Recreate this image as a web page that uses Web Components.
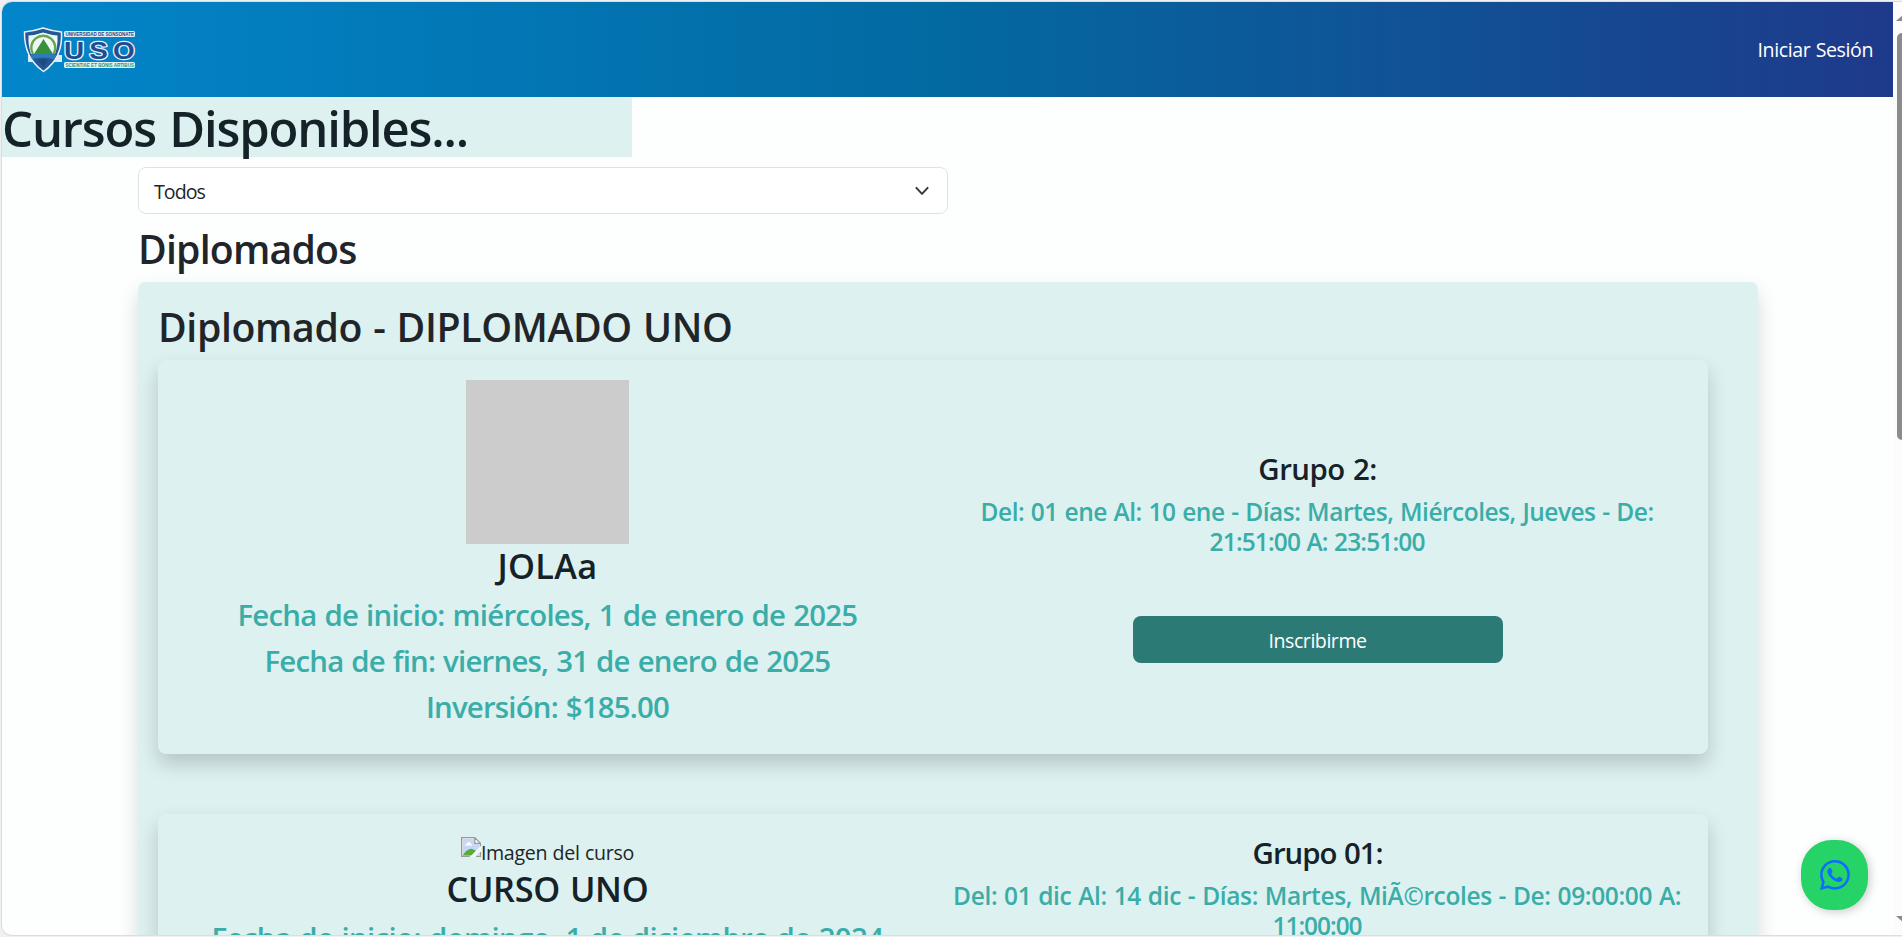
<!DOCTYPE html>
<html lang="es">
<head>
<meta charset="utf-8">
<title>Cursos Disponibles</title>
<style>
html,body{margin:0;height:100%;overflow:hidden;background:#f4f4f5}
body{font-family:"Open Sans","Noto Sans",sans-serif;font-size:19.6px;line-height:30px;color:#212529}
</style>
</head>
<body>
<courses-page></courses-page>
<script>
const define=(name,html,ready)=>customElements.define(name,class extends HTMLElement{
  connectedCallback(){
    if(this.shadowRoot)return;
    this.attachShadow({mode:'open'}).innerHTML=html;
    if(ready)ready.call(this,this.shadowRoot);
  }
});

// One line of text, tracked so that it takes up the width in its "w" attribute.
define('fit-text','<style>:host{display:inline-block;white-space:nowrap;word-spacing:.035em}</style><slot></slot>',function(){
  const w=parseFloat(this.getAttribute('w')),n=this.textContent.length;
  const r=document.createRange();r.selectNodeContents(this);
  const now=r.getBoundingClientRect().width;
  if(now)this.style.letterSpacing=((w-now)/n).toFixed(3)+'px';
});

define('uso-logo',`<style>:host{display:block;width:118px;height:46px}svg{display:block;overflow:visible}</style>
<svg width="118" height="46" viewBox="0 0 118 46">
<path d="M5 28h34v7H5z" fill="#dfe9f2"/>
<path d="M1.5 5Q11 4 20 1Q29 4 38.500 5Q40 31 20.500 44.500Q1 31 1.500 5Z" fill="#245796" stroke="#e8f1f8" stroke-width="1.5"/>
<path d="M5.500 8.500Q13 8 20 5.500Q28 8 34.500 8.500Q35 19 32 27H8Q5 19 5.500 8.500Z" fill="#f0f6f8"/>
<path d="M10 27A12 12 0 1 1 30.500 27" fill="none" stroke="#63a84a" stroke-width="2.4"/>
<path d="M20.500 12L30 27H11Z" fill="#36913b"/>
<path d="M7 28Q19 25.500 34 28L31 32Q19 29 9 32Z" fill="#2e7dba"/>
<path d="M15 33Q20 31 25 33L20.500 40Z" fill="#1d4a86"/>
<rect x="41" y="4" width="71" height="6" rx="1.5" fill="#e4edf5"/>
<rect x="41" y="35" width="71" height="6" rx="1.5" fill="#e4f1f0"/>
<g font-family="Liberation Sans,sans-serif" font-weight="700">
<text x="42.500" y="9.200" font-size="5.8" textLength="68.500" lengthAdjust="spacingAndGlyphs" fill="#24477f">UNIVERSIDAD DE SONSONATE</text>
<text transform="translate(41 31.500) scale(1.16 1)" font-size="24" textLength="61" fill="#234b8d" stroke="#e8f1f8" stroke-width="2.4" paint-order="stroke" stroke-linejoin="round">USO</text>
<text x="42.500" y="40.300" font-size="5.8" textLength="68.500" lengthAdjust="spacingAndGlyphs" fill="#25957a">SCIENTIAE ET BONIS ARTIBUS</text>
</g></svg>`);

define('top-bar',`<style>
:host{display:flex;align-items:center;justify-content:space-between;height:95px;box-sizing:border-box;padding:0 20px 0 21px;
background:linear-gradient(90deg,#0286ca,#0369a1 50%,#1e3a8a);color:#fff}
fit-text{padding-top:1px}
</style><uso-logo></uso-logo><fit-text w="115.5">Iniciar Sesión</fit-text>`);

define('filter-select',`<style>
:host{display:flex;align-items:center;justify-content:space-between;box-sizing:border-box;width:810px;height:47px;
margin:10px 0 0 136px;padding:2px 15px 0 15px;border:1px solid #dee2e6;border-radius:8px;background:#fff}
svg{margin-top:-2px}
</style><fit-text w="51">Todos</fit-text>
<svg width="20" height="20" viewBox="0 0 16 16" fill="none" stroke="#343a40" stroke-width="1.6" stroke-linecap="round" stroke-linejoin="round"><path d="m3.500 5.500 4.500 4.800 4.500-4.800"/></svg>`);

define('group-info',`<style>
:host{display:block}
h5,p{margin:0;font-weight:600;text-align:center}
h5{font-size:29.4px;line-height:36px;color:#152228}
p{margin:10px 1px 0 0;font-size:24.5px;line-height:30px;color:#3aada8}
fit-text{display:block;width:max-content;margin:0 auto}
::slotted(action-button){margin:59px auto 0}
</style><h5><slot name="title"></slot></h5><p><slot></slot></p><slot name="action"></slot>`);

define('action-button',`<style>
:host{display:block;width:370px;height:47px}
button{display:block;width:100%;height:100%;border:0;border-radius:8px;background:#2c7a76;color:#fff;font:inherit;line-height:30px;padding:3px 0 0}
</style><button><slot></slot></button>`);

define('course-image',`<style>:host{display:block;width:163px;height:164px;background:#ccc;margin:0 auto 1px}</style>`);

define('broken-image',`<style>
:host{display:flex;justify-content:center;height:30px;color:#212529}svg{margin-top:-1px}
</style>
<svg width="20" height="20" viewBox="0 0 16 16"><path d="M.5 .5H11L15.5 5V15.5H.5Z" fill="#fff"/><path d="M1.3 1.3H10.5V5.5H14.7V14.7H1.3Z" fill="#c6d7f7"/>
<path d="M3 6.8Q3 5.5 4.5 5.5Q5 3.8 6.5 4Q7.6 4.2 7.8 5.5Q9 5.5 9 6.8Z" fill="#fff"/>
<path d="M1.3 14.7Q5 9 9 9.5L12 11L9 14.7Z" fill="#56ad38"/>
<path d="M11 .5V5H15.5M.5 0V16M0 .5H11L15.5 5V9M0 15.5H7M12 15.5H16M15.5 12V16" fill="none" stroke="#999"/>
<path d="M16 7L7 16H11L16 11Z" fill="#eef8f7"/></svg><slot></slot>`);

define('course-card',`<style>
:host{display:grid;grid-template-columns:1fr 1fr;box-sizing:border-box;width:1550px;padding:20px 5.33px 19px 4.33px;border-radius:8px;
background:#ddf1f0;box-shadow:0 10px 20px rgba(0,0,0,.18)}
.left,.right{min-width:0}
.left{text-align:center}
.right{align-self:var(--side,center)}
h4,p{margin:0;font-weight:600}
h4{font-size:34.3px;line-height:42px;color:#152228;margin-bottom:10px}
::slotted([slot=line]){display:block!important;width:max-content;margin:0 auto 10px;font-size:29.4px;line-height:36px;font-weight:600;color:#3aada8}
</style>
<div class="left"><slot name="image"></slot><h4><slot name="name"></slot></h4><slot name="line"></slot></div>
<div class="right"><slot></slot></div>`);

define('program-panel',`<style>
:host{display:block;box-sizing:border-box;width:1620px;height:1000px;margin:9px 0 0 136px;padding:21px 20px;border-radius:8px;
background:#ddf1f0;box-shadow:0 10px 20px rgba(0,0,0,.15)}
h2{margin:0 0 9px;font-size:39.2px;line-height:48px;font-weight:600}
</style><h2><slot name="title"></slot></h2><slot></slot>`);

define('whatsapp-button',`<style>
:host{position:absolute;right:34px;bottom:27px;width:67px;height:70px;border-radius:31px;background:#25d366;
box-shadow:2px 2px 10px rgba(0,0,0,.2);display:flex;align-items:center;justify-content:center}
</style><svg width="30" height="30" viewBox="0 0 16 16" fill="#0d6efd"><path d="M13.601 2.326A7.85 7.85 0 0 0 7.994 0C3.627 0 .068 3.558.064 7.926c0 1.399.366 2.76 1.057 3.965L0 16l4.204-1.102a7.9 7.9 0 0 0 3.79.965h.004c4.368 0 7.926-3.558 7.93-7.93A7.9 7.9 0 0 0 13.6 2.326zM7.994 14.521a6.6 6.6 0 0 1-3.356-.92l-.24-.144-2.494.654.666-2.433-.156-.251a6.56 6.56 0 0 1-1.007-3.505c0-3.626 2.957-6.584 6.591-6.584a6.56 6.56 0 0 1 4.66 1.931 6.56 6.56 0 0 1 1.928 4.66c-.004 3.639-2.961 6.592-6.592 6.592m3.615-4.934c-.197-.099-1.17-.578-1.353-.646-.182-.065-.315-.099-.445.099-.133.197-.513.646-.627.775-.114.133-.232.148-.43.05-.197-.1-.836-.308-1.592-.985-.59-.525-.985-1.175-1.103-1.372-.114-.198-.011-.304.088-.403.087-.088.197-.232.296-.346.1-.114.133-.198.198-.33.065-.134.034-.248-.015-.347-.05-.099-.445-1.076-.612-1.47-.16-.389-.323-.335-.445-.34-.114-.007-.247-.007-.38-.007a.73.73 0 0 0-.529.247c-.182.198-.691.677-.691 1.654s.71 1.916.81 2.049c.098.133 1.394 2.132 3.383 2.992.47.205.84.326 1.129.418.475.152.904.129 1.246.08.38-.058 1.171-.48 1.338-.943.164-.464.164-.86.114-.943-.049-.084-.182-.133-.38-.232"/></svg>`);

define('scroll-rail',`<style>
:host{display:flex;flex-direction:column;width:9px;height:933px;background:#fcfcfc;overflow:hidden}
.up,.down{width:14px;height:6px;margin-left:3px;background:#8b8b8b;flex:none}
.up{margin-top:13px;clip-path:polygon(50% 0,100% 100%,0 100%)}
.thumb{width:10px;height:407px;margin:12px 0 0 4px;border-radius:5px;background:#8b8b8b;flex:none}
.down{margin-top:auto;margin-bottom:13px;clip-path:polygon(0 0,100% 0,50% 100%)}
</style><div class="up"></div><div class="thumb"></div><div class="down"></div>`);

define('courses-page',`<style>
:host{display:block;height:937px;box-sizing:border-box;padding:2px 0 2px 2px;background:#f0f0f0;position:relative}
.window{display:flex;height:933px;overflow:hidden;border-radius:10px 0 0 10px;box-shadow:0 0 0 1px #ddd;background:#fdfefe}
main{width:1891px;flex:none}
h1{box-sizing:border-box;width:630px;height:60px;margin:0;padding:1px 0 0;background:#ddf1f0;font-size:49px;line-height:60px;font-weight:600;color:#152228}
.section{margin:11px 0 0 136px;font-size:39.2px;line-height:48px;font-weight:600}
course-card group-info{margin-top:-2px}
course-card+course-card{margin-top:60px;padding-top:24px;--side:start}
course-card+course-card group-info{margin-top:-3px}
.l{display:block;width:max-content;margin:0 auto}
</style>
<div class="window"><main>
<top-bar></top-bar>
<h1><fit-text w="466">Cursos Disponibles...</fit-text></h1>
<filter-select></filter-select>
<h2 class="section"><fit-text w="218.5">Diplomados</fit-text></h2>
<program-panel>
<fit-text slot="title" w="574.5">Diplomado - DIPLOMADO UNO</fit-text>
<course-card>
<course-image slot="image"></course-image>
<fit-text slot="name" w="100">JOLAa</fit-text>
<fit-text slot="line" w="620">Fecha de inicio: miércoles, 1 de enero de 2025</fit-text>
<fit-text slot="line" w="566">Fecha de fin: viernes, 31 de enero de 2025</fit-text>
<fit-text slot="line" w="243">Inversión: $185.00</fit-text>
<group-info>
<fit-text slot="title" w="118.5">Grupo 2:</fit-text>
<fit-text class="l" w="673">Del: 01 ene Al: 10 ene - Días: Martes, Miércoles, Jueves - De:</fit-text>
<fit-text class="l" w="215">21:51:00 A: 23:51:00</fit-text>
<action-button slot="action"><fit-text w="98">Inscribirme</fit-text></action-button>
</group-info>
</course-card>
<course-card>
<broken-image slot="image"><fit-text w="153">Imagen del curso</fit-text></broken-image>
<fit-text slot="name" w="202">CURSO UNO</fit-text>
<fit-text slot="line" w="672">Fecha de inicio: domingo, 1 de diciembre de 2024</fit-text>
<group-info>
<fit-text slot="title" w="130">Grupo 01:</fit-text>
<fit-text class="l" w="728">Del: 01 dic Al: 14 dic - Días: Martes, MiÃ©rcoles - De: 09:00:00 A:</fit-text>
<fit-text class="l" w="89">11:00:00</fit-text>
</group-info>
</course-card>
</program-panel>
</main><scroll-rail></scroll-rail></div>
<whatsapp-button></whatsapp-button>`);
</script>
</body>
</html>
